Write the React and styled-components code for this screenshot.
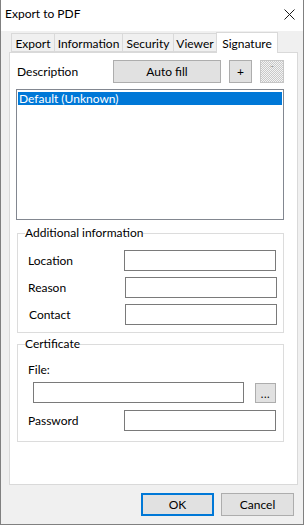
import React from 'react'
import styled, { createGlobalStyle } from 'styled-components'

const GlobalStyle = createGlobalStyle`
  html, body {
    margin: 0;
    padding: 0;
    background: #ffffff;
  }
  body {
    font-family: Lato, "Liberation Sans", sans-serif;
    font-size: 12px;
    color: #000;
  }
  * {
    box-sizing: border-box;
  }
`

const Window = styled.div`
  width: 304px;
  height: 525px;
  display: flex;
  flex-direction: column;
  border: 1px solid #808080;
  border-top: none;
  background: #f0f0f0;
`

const TitleBar = styled.div`
  height: 31px;
  flex: none;
  background: #ffffff;
  display: flex;
  justify-content: space-between;
  align-items: flex-start;
  padding: 6px 8px 0 4px;
  line-height: 16px;
  font-size: 12px;
`

const CloseIcon = styled.svg`
  width: 11px;
  height: 11px;
  margin-top: 3px;
`

const Body = styled.div`
  flex: 1;
  display: flex;
  flex-direction: column;
  padding: 1px 5px 0 8px;
`

const TabStrip = styled.div`
  height: 20px;
  display: flex;
  align-items: flex-end;
  padding-left: 2px;
`

const Tab = styled.div`
  position: relative;
  width: ${p => p.w}px;
  height: ${p => (p.active ? 21 : 19)}px;
  margin-bottom: ${p => (p.active ? -1 : 0)}px;
  margin-left: ${p => (p.first ? 0 : -1)}px;
  z-index: ${p => (p.active ? 2 : 1)};
  border: 1px solid #d9d9d9;
  border-bottom: ${p => (p.active ? 'none' : '1px solid #d9d9d9')};
  background: ${p => (p.active ? '#ffffff' : '#f0f0f0')};
  display: flex;
  align-items: center;
  justify-content: center;
  padding-top: ${p => (p.active ? 0 : 1)}px;
  white-space: nowrap;
`

const Panel = styled.div`
  height: 433px;
  width: 289px;
  background: #ffffff;
  border: 1px solid #d9d9d9;
  padding: 7px 0 0 6px;
  display: flex;
  flex-direction: column;
`

const TopRow = styled.div`
  display: flex;
  align-items: center;
  height: 23px;
  margin-left: 1px;
`

const RowLabel = styled.span`
  width: 96px;
  white-space: nowrap;
`

const Button = styled.button`
  font: inherit;
  color: #000;
  width: ${p => p.w}px;
  height: ${p => p.h || 23}px;
  margin-left: ${p => p.gap || 0}px;
  background: #e1e1e1;
  border: 1px solid #adadad;
  padding: 0;
  display: flex;
  align-items: center;
  justify-content: center;
`

const DefaultButton = styled(Button)`
  border: 2px solid #0078d7;
`

const DisabledButton = styled.div`
  width: 24px;
  height: 23px;
  margin-left: 8px;
  border: 1px solid #c6c6c6;
  background-color: #f4f4f4;
  background-image: repeating-conic-gradient(#c9c9c9 0% 25%, transparent 0% 50%);
  background-size: 2px 2px;
  color: #a0a0a0;
  display: flex;
  justify-content: center;
  line-height: 10px;
  font-size: 11px;
`

const DotsButton = styled(Button)`
  align-items: flex-end;
  padding-bottom: 3px;
  letter-spacing: 0.5px;
  font-size: 11px;
  line-height: 10px;
`

const ListBox = styled.div`
  width: 268px;
  height: 131px;
  margin-top: 6px;
  border: 1px solid #828790;
  padding: 2px 1px;
  flex: none;
`

const ListItem = styled.div`
  height: 13px;
  line-height: 13px;
  padding-left: 1px;
  background: ${p => (p.selected ? '#0078d7' : 'transparent')};
  color: ${p => (p.selected ? '#ffffff' : '#000')};
  white-space: nowrap;
`

const Group = styled.fieldset`
  width: 267px;
  margin: ${p => p.top}px 0 0 1px;
  padding: ${p => p.pad};
  border: 1px solid #dcdcdc;
  display: flex;
  flex-direction: column;
  gap: ${p => p.gap || 0}px;
  min-width: 0;
`

const Legend = styled.legend`
  margin-left: 7px;
  padding: 0;
  line-height: 14px;
  height: 14px;
  white-space: nowrap;
`

const FieldRow = styled.div`
  display: flex;
  align-items: center;
  justify-content: space-between;
  padding: 0 ${p => p.right}px 0 ${p => p.left}px;
  margin-top: ${p => p.top || 0}px;
`

const FieldLabel = styled.span`
  white-space: nowrap;
  line-height: 14px;
`

const TextBox = styled.div`
  width: ${p => p.w || 152}px;
  height: 21px;
  border: 1px solid #7a7a7a;
  background: #ffffff;
`

const Footer = styled.div`
  display: flex;
  justify-content: flex-end;
  margin-top: 8px;
  padding-right: 4px;
`

export default function App() {
  return (
    <>
      <GlobalStyle />
      <Window>
        <TitleBar>
          <span>Export to PDF</span>
          <CloseIcon viewBox="0 0 11 11">
            <path d="M0.5 0.5 L10.5 10.5 M10.5 0.5 L0.5 10.5" stroke="#1a1a1a" strokeWidth="1" fill="none" />
          </CloseIcon>
        </TitleBar>
        <Body>
          <TabStrip>
            <Tab first w={44}>Export</Tab>
            <Tab w={69}>Information</Tab>
            <Tab w={52}>Security</Tab>
            <Tab w={44}>Viewer</Tab>
            <Tab active w={62}>Signature</Tab>
          </TabStrip>
          <Panel>
            <TopRow>
              <RowLabel>Description</RowLabel>
              <Button w={108}>Auto fill</Button>
              <Button w={23} gap={8}>+</Button>
              <DisabledButton>-</DisabledButton>
            </TopRow>
            <ListBox>
              <ListItem selected>Default (Unknown)</ListItem>
            </ListBox>
            <Group top={6} pad="10px 0 7px 0" gap={6}>
              <Legend>Additional information</Legend>
              <FieldRow left={10} right={7}>
                <FieldLabel>Location</FieldLabel>
                <TextBox />
              </FieldRow>
              <FieldRow left={10} right={6}>
                <FieldLabel>Reason</FieldLabel>
                <TextBox />
              </FieldRow>
              <FieldRow left={11} right={6}>
                <FieldLabel>Contact</FieldLabel>
                <TextBox />
              </FieldRow>
            </Group>
            <Group top={4} pad="12px 0 10px 0">
              <Legend>Certificate</Legend>
              <FieldRow left={10} right={7}>
                <FieldLabel>File:</FieldLabel>
              </FieldRow>
              <FieldRow left={15} right={7} top={5}>
                <TextBox w={211} />
                <DotsButton w={21} h={20}>...</DotsButton>
              </FieldRow>
              <FieldRow left={10} right={7} top={7}>
                <FieldLabel>Password</FieldLabel>
                <TextBox />
              </FieldRow>
            </Group>
          </Panel>
          <Footer>
            <DefaultButton w={73}>OK</DefaultButton>
            <Button w={73} gap={7}>Cancel</Button>
          </Footer>
        </Body>
      </Window>
    </>
  )
}
